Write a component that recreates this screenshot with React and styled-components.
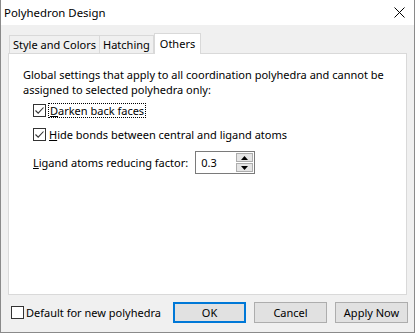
import React from 'react'
import styled, { createGlobalStyle } from 'styled-components'

const Global = createGlobalStyle`
  html, body {
    margin: 0;
    padding: 0;
    background: #f0f0f0;
  }
  body {
    font-family: "Noto Sans", "Liberation Sans", sans-serif;
    font-size: 11px;
    color: #000;
    white-space: nowrap;
  }
`

const Window = styled.div`
  box-sizing: border-box;
  width: 415px;
  height: 333px;
  border: 1px solid #8a8a8a;
  border-top: none;
  background: #f0f0f0;
  display: flex;
  flex-direction: column;
`

const TitleBar = styled.div`
  height: 25px;
  background: #fff;
  display: flex;
  align-items: center;
  justify-content: space-between;
  padding: 0 9px 0 3px;
  font-size: 11.4px;
`

const Body = styled.div`
  flex: 1;
  display: flex;
  flex-direction: column;
  padding: 8px 7px 0 7px;
`

const TabStrip = styled.div`
  display: flex;
  align-items: flex-end;
  height: 20px;
  padding-left: 1px;
`

const Tab = styled.div`
  box-sizing: border-box;
  height: ${p => (p.$active ? 21 : 19)}px;
  padding: 0 ${p => (p.$active ? 5 : 3)}px ${p => (p.$active ? 2 : 0)}px;
  margin-bottom: -1px;
  border: 1px solid #d9d9d9;
  border-bottom: ${p => (p.$active ? 'none' : '1px solid #d9d9d9')};
  border-left: ${p => (p.$first || p.$active ? '1px solid #d9d9d9' : 'none')};
  background: ${p => (p.$active ? '#fff' : '#f0f0f0')};
  display: flex;
  align-items: center;
  position: relative;
  z-index: ${p => (p.$active ? 2 : 1)};
`

const Panel = styled.div`
  box-sizing: border-box;
  height: 242px;
  background: #fff;
  border: 1px solid #d9d9d9;
  padding: 13px 14px 0;
  display: flex;
  flex-direction: column;
`

const Intro = styled.p`
  margin: 0 0 6px;
  line-height: 15px;
`

const Options = styled.div`
  display: flex;
  flex-direction: column;
  gap: 9px;
  padding-left: 10px;
`

const CheckRow = styled.label`
  display: flex;
  align-items: center;
  gap: 3px;
  height: 15px;
`

const Box = styled.span`
  box-sizing: border-box;
  width: 13px;
  height: 13px;
  border: 1px solid #333;
  background: #fff;
  display: flex;
  align-items: center;
  justify-content: center;
`

const Label = styled.span`
  outline: ${p => (p.$focus ? '1px dotted #000' : 'none')};
  padding: 0 ${p => (p.$focus ? 1 : 0)}px;
  line-height: 13px;
`

const U = styled.span`
  text-decoration: underline;
`

const FactorRow = styled.div`
  display: flex;
  align-items: center;
  gap: 7px;
`

const Spin = styled.div`
  box-sizing: border-box;
  width: 60px;
  height: 23px;
  border: 1px solid #7a7a7a;
  background: #fff;
  display: flex;
  align-items: stretch;
  padding: 1px;
`

const SpinValue = styled.div`
  flex: 1;
  padding-left: 4px;
  display: flex;
  align-items: center;
`

const SpinButtons = styled.div`
  width: 17px;
  display: flex;
  flex-direction: column;
  gap: 1px;
`

const SpinButton = styled.div`
  flex: 1;
  box-sizing: border-box;
  background: #e5e5e5;
  border: 1px solid #adadad;
  display: flex;
  align-items: center;
  justify-content: center;
`

const Footer = styled.div`
  flex: 1;
  display: flex;
  align-items: center;
  padding: 0 0 2px 3px;
`

const DefaultCheck = styled(CheckRow)`
  flex: 1;
  gap: 2px;
`

const Buttons = styled.div`
  display: flex;
  gap: 8px;
  margin-right: -1px;
`

const Button = styled.div`
  box-sizing: border-box;
  width: 73px;
  height: 21px;
  background: #e1e1e1;
  border: ${p => (p.$default ? '2px solid #0078d7' : '1px solid #adadad')};
  display: flex;
  align-items: center;
  justify-content: center;
`

const Check = () => (
  <svg width="11" height="11" viewBox="0 0 11 11">
    <path d="M1.5 5.5 L4.2 8.2 L9.5 2.5" fill="none" stroke="#333" strokeWidth="1.1" />
  </svg>
)

const Triangle = ({ up }) => (
  <svg width="7" height="4" viewBox="0 0 7 4">
    <path d={up ? 'M0 4 L3.5 0 L7 4 Z' : 'M0 0 L7 0 L3.5 4 Z'} fill="#000" />
  </svg>
)

export default function App() {
  return (
    <>
      <Global />
      <Window>
        <TitleBar>
          <span>Polyhedron Design</span>
          <svg width="11" height="11" viewBox="0 0 11 11">
            <path d="M0.5 0.5 L10.5 10.5 M10.5 0.5 L0.5 10.5" stroke="#000" strokeWidth="1" />
          </svg>
        </TitleBar>
        <Body>
          <TabStrip>
            <Tab $first>Style and Colors</Tab>
            <Tab>Hatching</Tab>
            <Tab $active>Others</Tab>
          </TabStrip>
          <Panel>
            <Intro>
              Global settings that apply to all coordination polyhedra and cannot be
              <br />
              assigned to selected polyhedra only:
            </Intro>
            <Options>
              <CheckRow>
                <Box><Check /></Box>
                <Label $focus><U>D</U>arken back faces</Label>
              </CheckRow>
              <CheckRow>
                <Box><Check /></Box>
                <Label><U>H</U>ide bonds between central and ligand atoms</Label>
              </CheckRow>
              <FactorRow>
                <Label><U>L</U>igand atoms reducing factor:</Label>
                <Spin>
                  <SpinValue>0.3</SpinValue>
                  <SpinButtons>
                    <SpinButton><Triangle up /></SpinButton>
                    <SpinButton><Triangle /></SpinButton>
                  </SpinButtons>
                </Spin>
              </FactorRow>
            </Options>
          </Panel>
          <Footer>
            <DefaultCheck>
              <Box />
              <Label>Default for new polyhedra</Label>
            </DefaultCheck>
            <Buttons>
              <Button $default>OK</Button>
              <Button>Cancel</Button>
              <Button>Apply Now</Button>
            </Buttons>
          </Footer>
        </Body>
      </Window>
    </>
  )
}
